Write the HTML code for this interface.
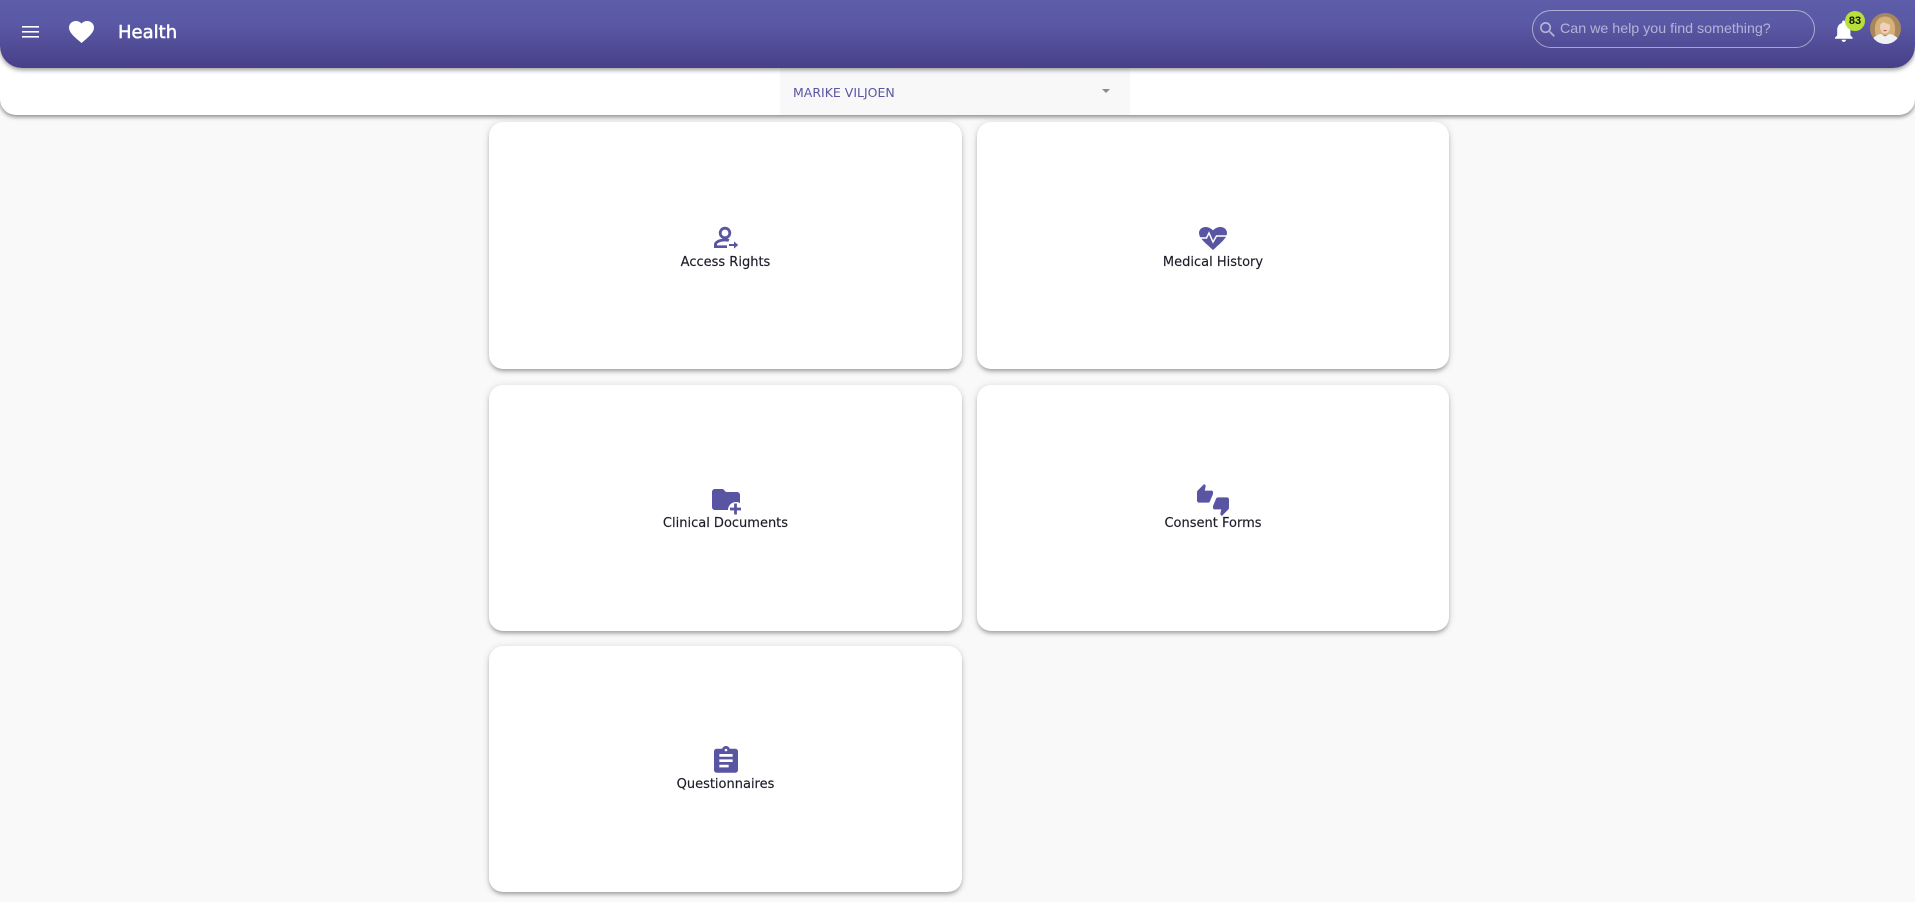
<!DOCTYPE html>
<html><head><meta charset="utf-8"><style>
html,body{margin:0;padding:0;width:1915px;height:902px;overflow:hidden;background:#f9f9f9}
*{box-sizing:border-box}
.abs,.l{position:absolute}
#sub{position:absolute;left:0;top:0;width:1915px;height:115px;background:#fff;border-radius:0 0 16px 16px;box-shadow:0 2px 4px rgba(0,0,0,.45)}
#dd{position:absolute;left:780px;top:68px;width:350px;height:47px;background:#f8f8f8}
#bar{position:absolute;left:0;top:0;width:1915px;height:68px;background:linear-gradient(#5c5ca8 0%,#5a59a5 35%,#483f88 100%);border-radius:0 0 22px 22px;box-shadow:0 2px 5px rgba(0,0,0,.4)}
.card{position:absolute;background:#fff;border-radius:14px;box-shadow:0 3px 4px -1px rgba(0,0,0,.3),0 1px 8px rgba(0,0,0,.14)}
.l{font:13px/18px "DejaVu Sans",sans-serif;color:#1c1c28;white-space:nowrap;text-align:center;width:300px;-webkit-text-stroke:.15px #1c1c28}
#title{position:absolute;left:118px;top:19.500px;font:18px/26px "DejaVu Sans",sans-serif;color:#fff;-webkit-text-stroke:.5px #fff}
#name{position:absolute;left:793px;top:84px;font:12.500px/18px "DejaVu Sans",sans-serif;color:#5a55a3;white-space:nowrap}
#search{position:absolute;left:1532px;top:10px;width:283px;height:38px;border:1px solid rgba(255,255,255,.5);border-radius:19px}
#ph{position:absolute;left:1560px;top:20px;font:14.250px/18px "Liberation Sans",sans-serif;color:rgba(255,255,255,.55);white-space:nowrap}
#b{position:absolute;left:1845px;top:11px;width:20px;height:20px;border-radius:50%;background:#b7e038;font:bold 11px/20px "Liberation Sans",sans-serif;color:#111;text-align:center}
svg{position:absolute;left:0;top:0}
</style></head><body>
<div id="sub"></div>
<div id="dd"></div>
<div id="bar"></div>
<div class="card" style="left:489px;top:122px;width:473px;height:247px"></div>
<div class="card" style="left:977px;top:122px;width:472px;height:247px"></div>
<div class="card" style="left:489px;top:385px;width:473px;height:246px"></div>
<div class="card" style="left:977px;top:385px;width:472px;height:246px"></div>
<div class="card" style="left:489px;top:646px;width:473px;height:246px"></div>
<div id="title">Health</div>
<div id="name">MARIKE VILJOEN</div>
<div id="search"></div>
<div id="ph">Can we help you find something?</div>
<div class="l" style="left:575.500px;top:254px">Access Rights</div>
<div class="l" style="left:1063px;top:254px">Medical History</div>
<div class="l" style="left:575.500px;top:515px">Clinical Documents</div>
<div class="l" style="left:1063px;top:515px">Consent Forms</div>
<div class="l" style="left:575.500px;top:776px">Questionnaires</div>
<svg width="1915" height="902" viewBox="0 0 1915 902">
<g fill="#fff">
<rect x="22" y="26" width="17" height="1.600"/><rect x="22" y="31" width="17" height="1.600"/><rect x="22" y="36" width="17" height="1.600"/>
<path transform="translate(66.500,17.400) scale(1.250,1.200)" d="M12 21.350l-1.450-1.320C5.400 15.360 2 12.280 2 8.500 2 5.420 4.420 3 7.500 3c1.740 0 3.410.81 4.500 2.090C13.090 3.810 14.760 3 16.500 3 19.580 3 22 5.420 22 8.500c0 3.780-3.400 6.860-8.550 11.540L12 21.350z"/>
<path transform="translate(1830.600,17.800) scale(1.100)" d="M12 22c1.100 0 2-.9 2-2h-4c0 1.100.89 2 2 2zm6-6v-5c0-3.070-1.640-5.640-4.500-6.320V4c0-.83-.67-1.500-1.500-1.500s-1.500.67-1.500 1.500v.68C7.630 5.360 6 7.920 6 11v5l-2 2v1h16v-1l-2-2z"/>
</g>
<path fill="rgba(255,255,255,.55)" transform="translate(1537.500,19.500) scale(.85)" d="M15.500 14h-.79l-.28-.27C15.410 12.590 16 11.110 16 9.500 16 5.910 13.090 3 9.500 3S3 5.910 3 9.500 5.910 16 9.500 16c1.610 0 3.090-.59 4.230-1.570l.27.28v.79l5 4.990L20.490 19l-4.990-5zm-6 0C7.010 14 5 11.990 5 9.500S7.010 5 9.500 5 14 7.010 14 9.500 11.990 14 9.500 14z"/>
<path fill="#8c8c8c" d="M1102 89h8l-4 4z"/>
<defs><clipPath id="av"><circle cx="1885.500" cy="28.500" r="15.500"/></clipPath></defs>
<g clip-path="url(#av)">
<rect x="1870" y="13" width="31" height="32" fill="#a8865f"/>
<path fill="#d6b27a" d="M1875.500 35c-2.500-13 3-18.500 9.500-18.500s12 5.500 9.500 18.500z"/>
<ellipse cx="1885" cy="27" rx="5" ry="6.500" fill="#efd2bb"/>
<path fill="#d6b27a" d="M1879.500 25c1-4 4-5.500 6-5.500 3 0 5 2 5.500 5.500-3-1-6-2-8-3z"/>
<path fill="#b5654f" d="M1882.500 30h5l-2.500 1.500z"/>
<path fill="#eef0f4" d="M1871 46c0-8 5-11.500 10-12l4 2.500 4.500-2.500c5 .5 10.500 4 10.500 12z"/>
</g>
<g fill="#5a55a3">
<circle cx="725" cy="233" r="4.800" fill="none" stroke="#5a55a3" stroke-width="2.800"/>
<path d="M714 248v-3.500c0-3.500 5-6 11-6 1.600 0 3 .2 4.400.5l-1 2.700c-1-.2-2.200-.3-3.400-.3-4.500 0-8 1.600-8 3.100v.9h10v2.600z"/>
<path d="M729 244h5v-2.600l4.200 3.600-4.200 3.600V246h-5z"/>
<path d="M1213 250l-2-1.800C1203.500 241.500 1199 237.500 1199 233c0-3.400 2.800-6 6.500-6 2.800 0 5.500 1.300 7.500 3.400 2-2.100 4.700-3.400 7.500-3.400 3.700 0 6.500 2.600 6.500 6 0 4.500-4.500 8.500-12 15.200z"/>
<path d="M1199 238h7.500l2.500-5 4 9 3.500-6h11" fill="none" stroke="#fff" stroke-width="1.500"/>
<path d="M715 489h8l3 3h11c1.700 0 3 1.300 3 3v15h-25c-1.700 0-3-1.300-3-3v-15c0-1.700 1.300-3 3-3z"/>
<circle cx="736" cy="510" r="8" fill="#fff"/>
<path d="M734.100 503.500h2.800v4.100h4.100v2.800h-4.100v4.100h-2.800v-4.100h-4.100v-2.800h4.100z"/>
<path transform="translate(1197,484) scale(1.333)" d="M12 6c0-.55-.45-1-1-1H5.820l.66-3.180.02-.23c0-.31-.13-.59-.33-.8L5.380 0 .44 4.940C.17 5.210 0 5.590 0 6v6.500c0 .83.67 1.500 1.500 1.500h6.750c.62 0 1.150-.38 1.380-.91l2.260-5.290c.07-.17.11-.36.11-.55V6zm10.500 4h-6.750c-.62 0-1.150.38-1.380.91l-2.260 5.290c-.07.17-.11.36-.11.55V18c0 .55.45 1 1 1h5.180l-.66 3.180-.02.24c0 .31.13.59.33.8l.79.78 4.940-4.940c.27-.27.44-.65.44-1.060v-6.500c0-.83-.67-1.500-1.500-1.500z"/>
<path transform="translate(710,744.700) scale(1.333)" d="M19 3h-4.180C14.400 1.840 13.300 1 12 1c-1.300 0-2.400.84-2.820 2H5c-1.100 0-2 .9-2 2v14c0 1.100.9 2 2 2h14c1.100 0 2-.9 2-2V5c0-1.100-.9-2-2-2zm-7 0c.55 0 1 .45 1 1s-.45 1-1 1-1-.45-1-1 .45-1 1-1zm2 14H7v-2h7v2zm3-4H7v-2h10v2zm0-4H7V7h10v2z"/>
</g>
</svg>
<div id="b">83</div>
</body></html>
